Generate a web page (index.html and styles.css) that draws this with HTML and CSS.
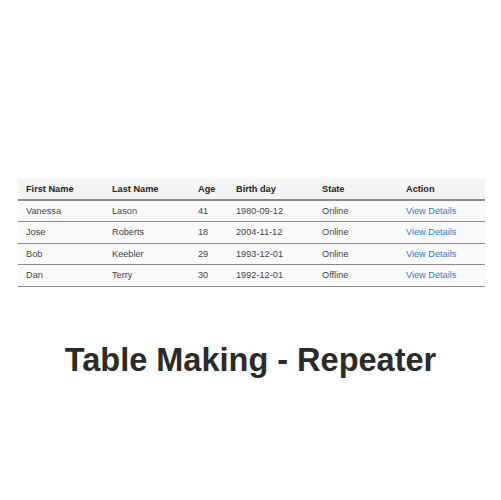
FILE: index.html
```html
<!DOCTYPE html>
<html>
<head>
<meta charset="utf-8">
<link rel="stylesheet" href="styles.css">
</head>
<body>
<div class="page">
  <table class="grid">
    <thead>
      <tr><th class="c1">First Name</th><th class="c2">Last Name</th><th class="c3">Age</th><th class="c4">Birth day</th><th class="c5">State</th><th class="c6">Action</th></tr>
    </thead>
    <tbody>
      <tr><td>Vanessa</td><td>Lason</td><td>41</td><td>1980-09-12</td><td>Online</td><td><a>View Details</a></td></tr>
      <tr><td>Jose</td><td>Roberts</td><td>18</td><td>2004-11-12</td><td>Online</td><td><a>View Details</a></td></tr>
      <tr><td>Bob</td><td>Keebler</td><td>29</td><td>1993-12-01</td><td>Online</td><td><a>View Details</a></td></tr>
      <tr><td>Dan</td><td>Terry</td><td>30</td><td>1992-12-01</td><td>Offline</td><td><a>View Details</a></td></tr>
    </tbody>
  </table>
  <h1 class="title">Table Making - Repeater</h1>
</div>
</body>
</html>
```
FILE: styles.css
```css
html, body { margin: 0; padding: 0; background: #fff; }
.page { width: 501px; height: 500px; padding-top: 179px; box-sizing: border-box; font-family: "Liberation Sans", Arial, sans-serif; }
.grid { margin-left: 18px; width: 467px; border-collapse: collapse; table-layout: fixed; font-size: 9.2px; color: #444; background: #fafafa; }
.grid th { text-align: left; font-weight: bold; color: #222; background: #f4f4f4; height: 20px; padding: 0 0 0 8px; border-bottom: 2px solid #8a8a8a; }
.grid td { height: 20px; padding: 0 0 0 8px; border-bottom: 1.5px solid #8a8a8a; }
.grid tbody tr { height: 21.5px; }
.c1 { width: 78px; } .c2 { width: 78px; } .c3 { width: 30px; } .c4 { width: 78px; } .c5 { width: 76px; } .c6 { width: 79px; }
.grid a { color: #1a7fd0; }
.title { margin: 55px 0 0 0; text-align: center; font-size: 32.5px; font-weight: bold; color: #2b2b2b; line-height: 36px; }
```
